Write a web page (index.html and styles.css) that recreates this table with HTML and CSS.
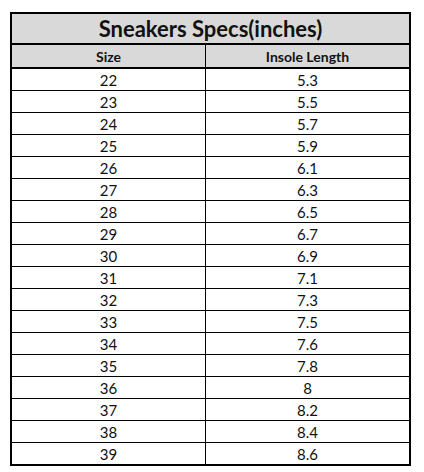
FILE: index.html
```html
<!DOCTYPE html>
<html>
<head>
<meta charset="utf-8">
<link rel="stylesheet" href="styles.css">
</head>
<body>
<div class="sheet">
  <div class="title">Sneakers Specs(inches)</div>
  <div class="row head">
    <div class="cell">Size</div>
    <div class="cell">Insole Length</div>
  </div>
  <div class="row"><div class="cell">22</div><div class="cell">5.3</div></div>
  <div class="row"><div class="cell">23</div><div class="cell">5.5</div></div>
  <div class="row"><div class="cell">24</div><div class="cell">5.7</div></div>
  <div class="row"><div class="cell">25</div><div class="cell">5.9</div></div>
  <div class="row"><div class="cell">26</div><div class="cell">6.1</div></div>
  <div class="row"><div class="cell">27</div><div class="cell">6.3</div></div>
  <div class="row"><div class="cell">28</div><div class="cell">6.5</div></div>
  <div class="row"><div class="cell">29</div><div class="cell">6.7</div></div>
  <div class="row"><div class="cell">30</div><div class="cell">6.9</div></div>
  <div class="row"><div class="cell">31</div><div class="cell">7.1</div></div>
  <div class="row"><div class="cell">32</div><div class="cell">7.3</div></div>
  <div class="row"><div class="cell">33</div><div class="cell">7.5</div></div>
  <div class="row"><div class="cell">34</div><div class="cell">7.6</div></div>
  <div class="row"><div class="cell">35</div><div class="cell">7.8</div></div>
  <div class="row"><div class="cell">36</div><div class="cell">8</div></div>
  <div class="row"><div class="cell">37</div><div class="cell">8.2</div></div>
  <div class="row"><div class="cell">38</div><div class="cell">8.4</div></div>
  <div class="row last"><div class="cell">39</div><div class="cell">8.6</div></div>
</div>
</body>
</html>
```
FILE: styles.css
```css
html, body {
  margin: 0;
  padding: 0;
  background: #ffffff;
}
body {
  font-family: Lato, "Liberation Sans", sans-serif;
  color: #111;
}
.sheet {
  margin: 12px 0 0 10px;
  width: 401px;
  border: 2px solid #000;
  box-sizing: border-box;
  display: flex;
  flex-direction: column;
}
.title {
  height: 29px;
  background: #d9d9d9;
  border-bottom: 2px solid #000;
  display: flex;
  align-items: center;
  justify-content: center;
  font-weight: 700;
  font-size: 22px;
  color: #111;
}
.row {
  display: grid;
  grid-template-columns: 194px 1fr;
  height: 21px;
  border-bottom: 1px solid #000;
}
.row.last {
  border-bottom: none;
}
.row.head {
  height: 22px;
  background: #d9d9d9;
  border-bottom: 2px solid #000;
  font-weight: 700;
  font-size: 14px;
}
.cell {
  display: flex;
  align-items: center;
  justify-content: center;
  font-size: 15px;
}
.head .cell {
  font-size: 14px;
}
.cell:first-child {
  border-right: 1px solid #000;
}
```
